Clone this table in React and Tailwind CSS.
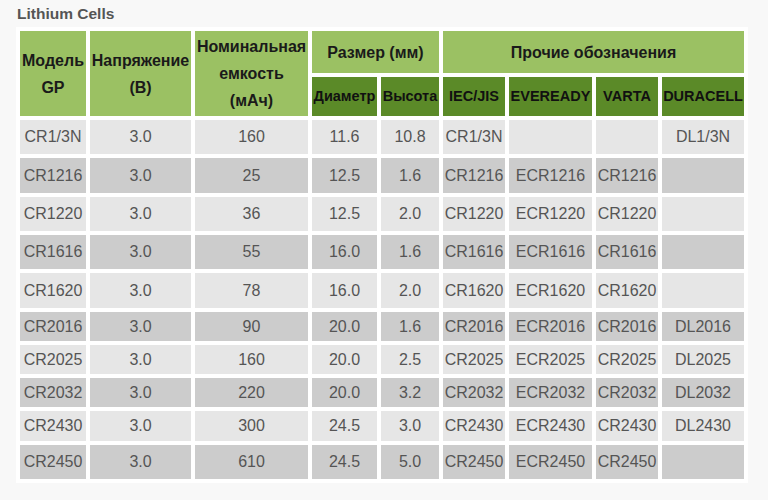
// App.jsx — Lithium Cells table

const rows = [
    ["CR1/3N", "3.0", "160", "11.6", "10.8", "CR1/3N", "", "", "DL1/3N"],
    ["CR1216", "3.0", "25", "12.5", "1.6", "CR1216", "ECR1216", "CR1216", ""],
    ["CR1220", "3.0", "36", "12.5", "2.0", "CR1220", "ECR1220", "CR1220", ""],
    ["CR1616", "3.0", "55", "16.0", "1.6", "CR1616", "ECR1616", "CR1616", ""],
    ["CR1620", "3.0", "78", "16.0", "2.0", "CR1620", "ECR1620", "CR1620", ""],
    ["CR2016", "3.0", "90", "20.0", "1.6", "CR2016", "ECR2016", "CR2016", "DL2016"],
    ["CR2025", "3.0", "160", "20.0", "2.5", "CR2025", "ECR2025", "CR2025", "DL2025"],
    ["CR2032", "3.0", "220", "20.0", "3.2", "CR2032", "ECR2032", "CR2032", "DL2032"],
    ["CR2430", "3.0", "300", "24.5", "3.0", "CR2430", "ECR2430", "CR2430", "DL2430"],
    ["CR2450", "3.0", "610", "24.5", "5.0", "CR2450", "ECR2450", "CR2450", ""]
];

const head = "bg-[#9bc163] text-[#1a1a1a] font-bold text-[16px] leading-[27px] flex items-center justify-center text-center whitespace-nowrap";
const sub = "bg-[#5b8a28] text-[#111] font-bold text-[14.5px] flex items-center justify-center whitespace-nowrap overflow-hidden";

export default function App() {
    return (
        <div
            className="w-[768px] h-[500px] bg-[#f8f8f8] overflow-hidden"
            style={{ fontFamily: '"Liberation Sans", Arial, sans-serif' }}
        >
            <div className="pl-[17px] pt-[2px] h-[27px] text-[15.5px] font-bold text-[#555]">
                Lithium Cells
            </div>

            <div className="ml-[16px] w-[732px] bg-white p-[4px]">
                <div className="grid grid-cols-[66px_101px_113px_65px_58px_62px_83px_62px_82px] grid-rows-[42px_39px] gap-[4px]">
                    <div className={`${head} row-span-2`}>Модель<br />GP</div>
                    <div className={`${head} row-span-2`}>Напряжение<br />(В)</div>
                    <div className={`${head} row-span-2`}>Номинальная<br />емкость<br />(мАч)</div>
                    <div className={`${head} col-span-2`}>Размер (мм)</div>
                    <div className={`${head} col-span-4`}>Прочие обозначения</div>
                    <div className={sub}>Диаметр</div>
                    <div className={sub}>Высота</div>
                    <div className={sub}>IEC/JIS</div>
                    <div className={sub}>EVEREADY</div>
                    <div className={sub}>VARTA</div>
                    <div className={sub}>DURACELL</div>
                </div>

                <div className="mt-[4px] grid grid-cols-[66px_101px_113px_65px_58px_62px_83px_62px_82px] grid-rows-[34px_35px_34px_34px_35px_29px_29px_29px_30px_34px] gap-[4px]">
                    {rows.map((row, r) =>
                        row.map((cell, c) => (
                            <div
                                key={`${r}-${c}`}
                                className={`flex items-center justify-center whitespace-nowrap text-[16px] text-[#555] ${
                                    r % 2 === 0 ? "bg-[#e6e6e6]" : "bg-[#cccccc]"
                                }`}
                            >
                                {cell}
                            </div>
                        ))
                    )}
                </div>
            </div>
        </div>
    );
}
